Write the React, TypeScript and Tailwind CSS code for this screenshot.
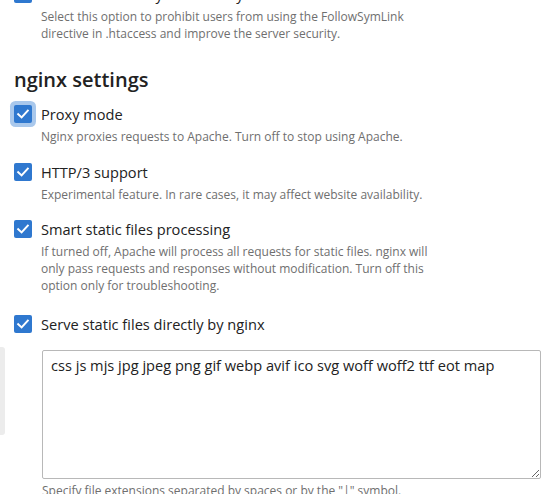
import React from "react";

const font = { fontFamily: '"Open Sans", "Noto Sans", sans-serif' };

function Check({ focused = false }: { focused?: boolean }) {
  return (
    <span
      className={
        "relative flex h-[18px] w-[18px] shrink-0 items-center justify-center rounded-[2px] bg-[#2f78cf] " +
        (focused ? "ring-[4px] ring-[#a9c8ec]" : "")
      }
    >
      <svg width="14" height="14" viewBox="0 0 14 14" fill="none">
        <path d="M2.2 7.2 L5.6 10.4 L11.8 3.6" stroke="#ffffff" strokeWidth="2" strokeLinecap="square" />
      </svg>
    </span>
  );
}

function Row({ label, focused, className }: { label: string; focused?: boolean; className: string }) {
  return (
    <div className={"flex h-[20px] items-center gap-[9px] " + className}>
      <Check focused={focused} />
      <span className="text-[14.6px] leading-[20px] text-[#222222]">{label}</span>
    </div>
  );
}

function Desc({ children }: { children: React.ReactNode }) {
  return (
    <p className="mt-[4px] pl-[27px] text-[12px] leading-[17px] text-[#6f6f6f]">{children}</p>
  );
}

export default function App() {
  return (
    <div className="relative h-[494px] w-[556px] overflow-hidden bg-white" style={font}>
      <div className="absolute left-0 top-[347px] h-[88px] w-[5px] rounded-r-[3px] bg-[#ececec]" />
      <div className="pl-[14px]">
        <Row label="Restrict the ability to follow symbolic links" className="-mt-[16px]" />
        <Desc>
          Select this option to prohibit users from using the FollowSymLink
          <br />
          directive in .htaccess and improve the server security.
        </Desc>

        <h2 className="mt-[26px] text-[20px] font-semibold leading-[24px] text-[#222222]">nginx settings</h2>

        <Row label="Proxy mode" focused className="mt-[12px]" />
        <Desc>Nginx proxies requests to Apache. Turn off to stop using Apache.</Desc>

        <Row label="HTTP/3 support" className="mt-[17px]" />
        <Desc>Experimental feature. In rare cases, it may affect website availability.</Desc>

        <Row label="Smart static files processing" className="mt-[16px]" />
        <Desc>
          If turned off, Apache will process all requests for static files. nginx will
          <br />
          only pass requests and responses without modification. Turn off this
          <br />
          option only for troubleshooting.
        </Desc>

        <Row label="Serve static files directly by nginx" className="mt-[20px]" />
        <div className="ml-[28px] mt-[16px]">
          <textarea
            readOnly
            defaultValue="css js mjs jpg jpeg png gif webp avif ico svg woff woff2 ttf eot map"
            className="block h-[129px] w-[499px] resize-y rounded-[2px] border border-[#b8b8b8] px-[8px] pt-[4px] text-[14.6px] leading-[20px] text-[#222222] outline-none"
            style={font}
          />
          <p className="mt-[3px] text-[12px] leading-[17px] text-[#6f6f6f]">
            Specify file extensions separated by spaces or by the "|" symbol.
          </p>
        </div>
      </div>
    </div>
  );
}
